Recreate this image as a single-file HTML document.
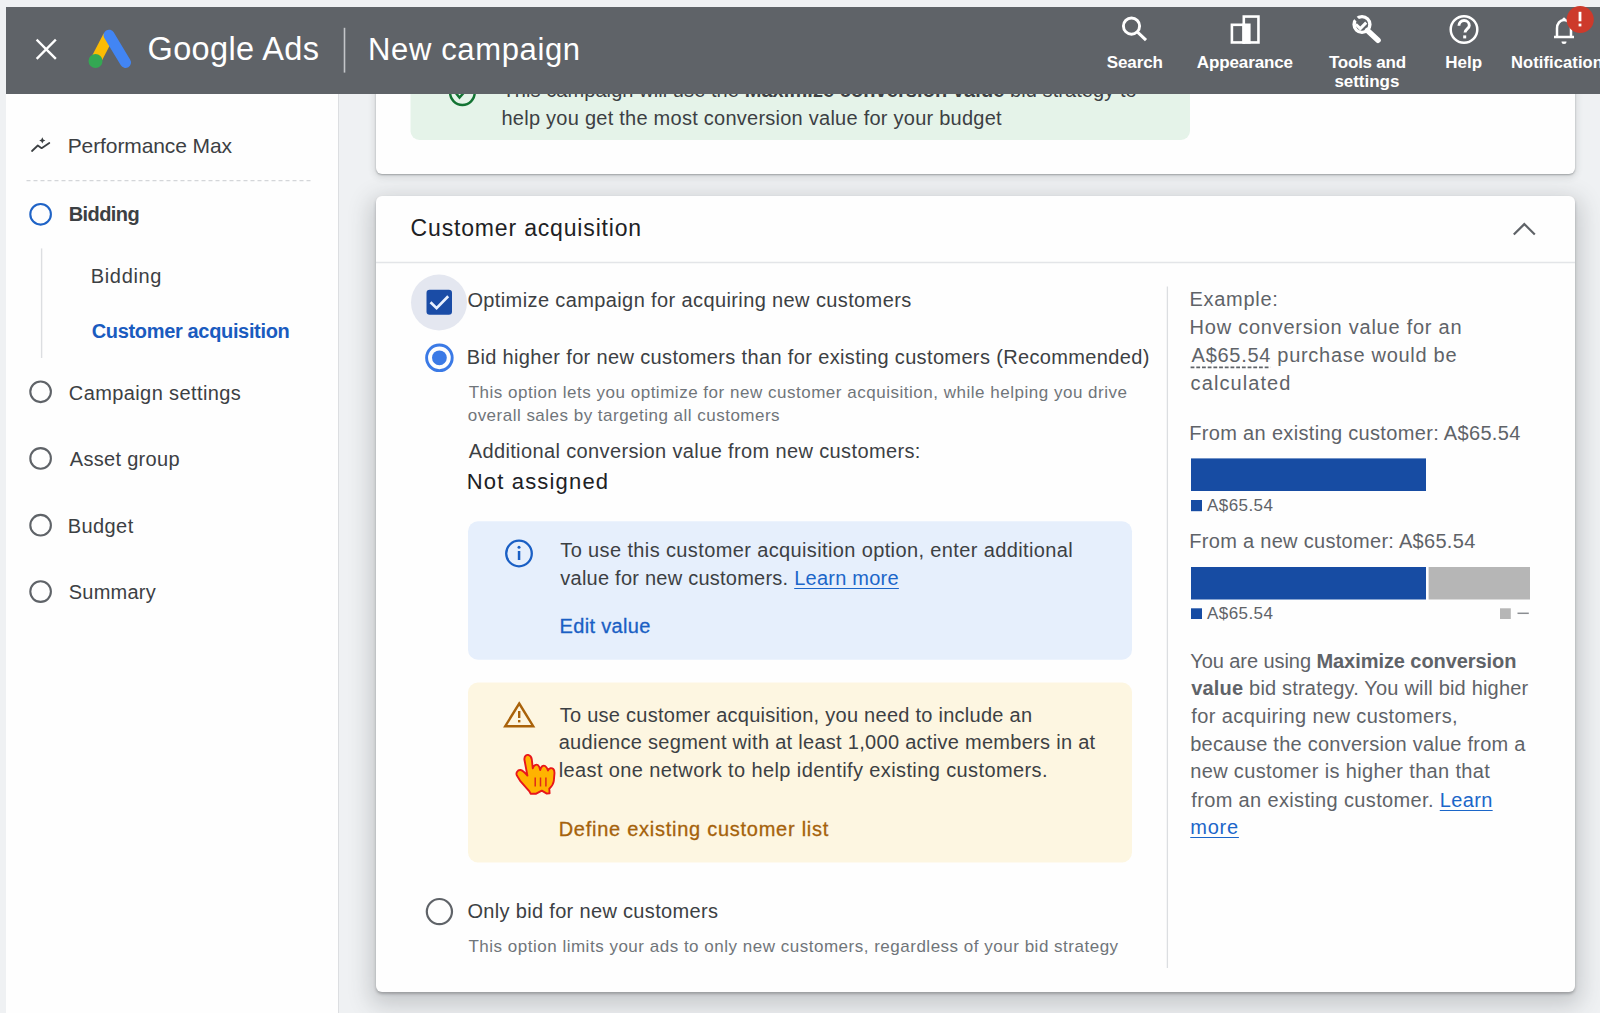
<!DOCTYPE html>
<html><head><meta charset="utf-8">
<style>
html,body{margin:0;padding:0;}
body{width:1600px;height:1013px;overflow:hidden;position:relative;background:#eff1f3;font-family:"Liberation Sans",sans-serif;}
.t{position:absolute;white-space:nowrap;}
.t a{color:#1b66c9;text-decoration:underline;text-underline-offset:3px;text-decoration-thickness:1.2px;}
.t b{font-weight:700;}
.du{}
#hdr{position:absolute;left:6px;top:7px;width:1594px;height:87px;background:#5f6368;z-index:5;}
#side{position:absolute;left:6px;top:94px;width:332px;height:919px;background:#fefefe;border-right:1px solid #dcdee1;}
.card{position:absolute;background:#fefefe;border-radius:6px;}
#card1{left:376px;top:40px;width:1199px;height:134px;box-shadow:0 1px 2px rgba(60,64,67,.4),0 2px 6px 2px rgba(60,64,67,.12);}
#card2{left:376px;top:196px;width:1199px;height:795.5px;box-shadow:0 2px 3px rgba(60,64,67,.35),0 8px 22px 6px rgba(60,64,67,.22);}
svg{position:absolute;left:0;top:0;overflow:visible;}
</style></head><body>
<div id="side"></div>
<div class="card" id="card1"></div>
<div class="card" id="card2"></div>
<svg width="1600" height="1013" style="z-index:1">
  <!-- sidebar -->
  <g fill="none" stroke="#3c4043" stroke-width="1.8" stroke-linejoin="round" stroke-linecap="round">
    <polyline points="32,151 37.8,145.5 41.6,148.2 49.3,143"/>
  </g>
  <path d="M42.3 137.3 l1 2.1 2.1 1 -2.1 1 -1 2.1 -1 -2.1 -2.1 -1 2.1 -1z" fill="#3c4043"/>
  <line x1="26.5" y1="180.6" x2="312.5" y2="180.6" stroke="#d4d6d9" stroke-width="1.2" stroke-dasharray="4 3"/>
  <circle cx="40.6" cy="214.3" r="10.3" fill="none" stroke="#1f63c6" stroke-width="2.1"/>
  <line x1="41.6" y1="248.4" x2="41.6" y2="358" stroke="#dcdee1" stroke-width="1.4"/>
  <g fill="none" stroke="#5f6368" stroke-width="2.1">
    <circle cx="40.6" cy="391.8" r="10.3"/>
    <circle cx="40.6" cy="458.4" r="10.3"/>
    <circle cx="40.6" cy="525.2" r="10.3"/>
    <circle cx="40.6" cy="591.6" r="10.3"/>
  </g>
  <!-- card1 green box -->
  <rect x="410.5" y="40" width="779.5" height="100" rx="9" fill="#e5f3e9"/>
  <circle cx="462.4" cy="92.6" r="12.3" fill="none" stroke="#137333" stroke-width="2.5"/>
  <polyline points="455,92 459.5,97.5 468,88" fill="none" stroke="#137333" stroke-width="2.5"/>
  <!-- card2 -->
  <line x1="376" y1="262.5" x2="1575" y2="262.5" stroke="#e3e5e8" stroke-width="1.5"/>
  <polyline points="1513.8,234.5 1524.3,224.1 1534.8,234.5" fill="none" stroke="#5f6368" stroke-width="2.2"/>
  <circle cx="439" cy="302.5" r="28" fill="#e4e7f0"/>
  <rect x="426.5" y="289.7" width="25.5" height="25.1" rx="3.2" fill="#1a4ca6"/>
  <polyline points="430.5,302.2 436.6,308.1 448.2,296.3" fill="none" stroke="#e8f0fe" stroke-width="2.7"/>
  <circle cx="439.4" cy="357.8" r="12.8" fill="none" stroke="#3b7ae6" stroke-width="2.9"/>
  <circle cx="439.4" cy="357.8" r="7.4" fill="#3b7ae6"/>
  <rect x="468" y="521.3" width="664" height="138.5" rx="10" fill="#e6effc"/>
  <circle cx="519" cy="553.5" r="12.8" fill="none" stroke="#1a5fc4" stroke-width="2.3"/>
  <rect x="517.8" y="551" width="2.5" height="9" fill="#1a5fc4"/>
  <circle cx="519" cy="547.3" r="1.5" fill="#1a5fc4"/>
  <rect x="468" y="682.5" width="664" height="180" rx="10" fill="#fdf6e1"/>
  <path d="M519.2 703.5 L533.2 726.2 L505.2 726.2 Z" fill="none" stroke="#a9620a" stroke-width="2.4" stroke-linejoin="miter"/>
  <rect x="518" y="711" width="2.4" height="7" fill="#a9620a"/>
  <rect x="518" y="720" width="2.4" height="2.4" fill="#a9620a"/>
  <circle cx="439.4" cy="911.6" r="12.6" fill="none" stroke="#5f6368" stroke-width="2.2"/>
  <line x1="1167.4" y1="286.5" x2="1167.4" y2="968" stroke="#dcdee1" stroke-width="1.3"/>
  <!-- bars -->
  <rect x="1191" y="458.4" width="235" height="32.6" fill="#174ca3"/>
  <rect x="1191" y="500" width="11" height="11.2" fill="#174ca3"/>
  <rect x="1191" y="567" width="235" height="32.5" fill="#174ca3"/>
  <rect x="1428.6" y="567" width="101.4" height="32.5" fill="#b6b6b6"/>
  <rect x="1191" y="608.3" width="11" height="10.7" fill="#174ca3"/>
  <rect x="1500" y="608.3" width="10.8" height="10.7" fill="#b6b6b6"/>
  <line x1="1190.6" y1="367.3" x2="1270.5" y2="367.3" stroke="#5f6368" stroke-width="1.7" stroke-dasharray="3.8 1.9"/>
  <line x1="1517.5" y1="613.3" x2="1528.8" y2="613.3" stroke="#8a8d91" stroke-width="1.5"/>
</svg>
<div style="position:absolute;left:0;top:0;z-index:2">
<div class="t" id="s_pmax" style="left:67.70px;top:133.40px;font-size:21px;line-height:26px;letter-spacing:-0.100px;color:#3c4043;">Performance Max</div>
<div class="t" id="s_bid" style="left:68.70px;top:202.25px;font-size:20px;line-height:25px;letter-spacing:-0.567px;color:#3c4043;font-weight:700;">Bidding</div>
<div class="t" id="s_bid2" style="left:90.75px;top:263.75px;font-size:20px;line-height:25px;letter-spacing:0.667px;color:#3c4043;">Bidding</div>
<div class="t" id="s_ca" style="left:91.75px;top:319.00px;font-size:20px;line-height:25px;letter-spacing:-0.342px;color:#1a5bbf;font-weight:700;">Customer acquisition</div>
<div class="t" id="s_cs" style="left:68.80px;top:380.60px;font-size:20px;line-height:25px;letter-spacing:0.400px;color:#3c4043;">Campaign settings</div>
<div class="t" id="s_ag" style="left:69.80px;top:447.00px;font-size:20px;line-height:25px;letter-spacing:0.300px;color:#3c4043;">Asset group</div>
<div class="t" id="s_bu" style="left:67.80px;top:514.00px;font-size:20px;line-height:25px;letter-spacing:0.400px;color:#3c4043;">Budget</div>
<div class="t" id="s_su" style="left:68.80px;top:579.70px;font-size:20px;line-height:25px;letter-spacing:0.233px;color:#3c4043;">Summary</div>
<div class="t" id="c1_l1" style="left:502.50px;top:77.50px;font-size:20px;line-height:25px;letter-spacing:0.075px;color:#3c4043;">This campaign will use the <b>Maximize conversion value</b> bid strategy to</div>
<div class="t" id="c1_l2" style="left:501.50px;top:105.50px;font-size:20px;line-height:25px;letter-spacing:0.249px;color:#3c4043;">help you get the most conversion value for your budget</div>
<div class="t" id="c2_title" style="left:410.60px;top:213.60px;font-size:23px;line-height:29px;letter-spacing:0.832px;color:#202124;">Customer acquisition</div>
<div class="t" id="c2_opt" style="left:467.40px;top:288.20px;font-size:20px;line-height:25px;letter-spacing:0.386px;color:#3c4043;">Optimize campaign for acquiring new customers</div>
<div class="t" id="c2_bid" style="left:466.70px;top:344.75px;font-size:20px;line-height:25px;letter-spacing:0.357px;color:#3c4043;">Bid higher for new customers than for existing customers (Recommended)</div>
<div class="t" id="c2_d1" style="left:468.70px;top:382.40px;font-size:17px;line-height:21px;letter-spacing:0.515px;color:#70757a;">This option lets you optimize for new customer acquisition, while helping you drive</div>
<div class="t" id="c2_d2" style="left:467.70px;top:405.00px;font-size:17px;line-height:21px;letter-spacing:0.487px;color:#70757a;">overall sales by targeting all customers</div>
<div class="t" id="c2_add" style="left:468.70px;top:439.00px;font-size:20px;line-height:25px;letter-spacing:0.370px;color:#3c4043;">Additional conversion value from new customers:</div>
<div class="t" id="c2_na" style="left:466.70px;top:468.00px;font-size:22px;line-height:28px;letter-spacing:1.182px;color:#202124;">Not assigned</div>
<div class="t" id="i_l1" style="left:560.30px;top:538.25px;font-size:20px;line-height:25px;letter-spacing:0.375px;color:#3c4043;">To use this customer acquisition option, enter additional</div>
<div class="t" id="i_l2" style="left:560.30px;top:566.40px;font-size:20px;line-height:25px;letter-spacing:0.241px;color:#3c4043;">value for new customers. <a>Learn more</a></div>
<div class="t" id="i_edit" style="left:559.50px;top:613.80px;font-size:20px;line-height:25px;letter-spacing:0.333px;color:#1a5fc4;-webkit-text-stroke:0.3px #1a5fc4;">Edit value</div>
<div class="t" id="w_l1" style="left:559.70px;top:702.50px;font-size:20px;line-height:25px;letter-spacing:0.264px;color:#3c4043;">To use customer acquisition, you need to include an</div>
<div class="t" id="w_l2" style="left:558.70px;top:730.10px;font-size:20px;line-height:25px;letter-spacing:0.289px;color:#3c4043;">audience segment with at least 1,000 active members in at</div>
<div class="t" id="w_l3" style="left:558.70px;top:757.70px;font-size:20px;line-height:25px;letter-spacing:0.392px;color:#3c4043;">least one network to help identify existing customers.</div>
<div class="t" id="w_def" style="left:558.70px;top:817.00px;font-size:20px;line-height:25px;letter-spacing:0.736px;color:#a5620b;-webkit-text-stroke:0.3px #a5620b;">Define existing customer list</div>
<div class="t" id="c2_only" style="left:467.40px;top:898.60px;font-size:20px;line-height:25px;letter-spacing:0.328px;color:#3c4043;">Only bid for new customers</div>
<div class="t" id="c2_d3" style="left:468.40px;top:936.40px;font-size:17px;line-height:21px;letter-spacing:0.509px;color:#70757a;">This option limits your ads to only new customers, regardless of your bid strategy</div>
<div class="t" id="r_ex" style="left:1189.60px;top:287.40px;font-size:20px;line-height:25px;letter-spacing:0.686px;color:#5f6368;">Example:</div>
<div class="t" id="r_l1" style="left:1189.60px;top:315.00px;font-size:20px;line-height:25px;letter-spacing:0.754px;color:#5f6368;">How conversion value for an</div>
<div class="t" id="r_l2" style="left:1191.60px;top:343.00px;font-size:20px;line-height:25px;letter-spacing:0.708px;color:#5f6368;"><span class=du>A$65.54</span> purchase would be</div>
<div class="t" id="r_l3" style="left:1190.60px;top:370.60px;font-size:20px;line-height:25px;letter-spacing:1.089px;color:#5f6368;">calculated</div>
<div class="t" id="r_from1" style="left:1189.25px;top:420.70px;font-size:20px;line-height:25px;letter-spacing:0.330px;color:#5f6368;">From an existing customer: A$65.54</div>
<div class="t" id="r_lg1" style="left:1207.00px;top:495.25px;font-size:17px;line-height:21px;letter-spacing:0.433px;color:#5f6368;">A$65.54</div>
<div class="t" id="r_from2" style="left:1189.25px;top:528.70px;font-size:20px;line-height:25px;letter-spacing:0.300px;color:#5f6368;">From a new customer: A$65.54</div>
<div class="t" id="r_lg2" style="left:1207.00px;top:602.80px;font-size:17px;line-height:21px;letter-spacing:0.433px;color:#5f6368;">A$65.54</div>
<div class="t" id="p1" style="left:1190.25px;top:648.50px;font-size:20px;line-height:25px;letter-spacing:-0.066px;color:#5f6368;">You are using <b>Maximize conversion</b></div>
<div class="t" id="p2" style="left:1191.25px;top:676.10px;font-size:20px;line-height:25px;letter-spacing:0.187px;color:#5f6368;"><b>value</b> bid strategy. You will bid higher</div>
<div class="t" id="p3" style="left:1191.25px;top:704.25px;font-size:20px;line-height:25px;letter-spacing:0.396px;color:#5f6368;">for acquiring new customers,</div>
<div class="t" id="p4" style="left:1190.25px;top:731.70px;font-size:20px;line-height:25px;letter-spacing:0.244px;color:#5f6368;">because the conversion value from a</div>
<div class="t" id="p5" style="left:1190.25px;top:758.70px;font-size:20px;line-height:25px;letter-spacing:0.339px;color:#5f6368;">new customer is higher than that</div>
<div class="t" id="p6" style="left:1191.25px;top:787.50px;font-size:20px;line-height:25px;letter-spacing:0.352px;color:#5f6368;">from an existing customer. <a>Learn</a></div>
<div class="t" id="p7" style="left:1190.25px;top:815.00px;font-size:20px;line-height:25px;letter-spacing:0.767px;color:#5f6368;"><a>more</a></div>
</div>
<!-- hand cursor -->
<svg width="1600" height="1013" style="z-index:3">
  <g>
    <path d="M524.4 759.5 C524.2 755.8 526.6 754.6 528.2 754.9 C530.4 755.4 531.5 757.4 531.8 759.5 L532.8 768.3 C533.6 764.9 536.3 764.1 537.8 765 C539.2 765.9 539.8 768 540.2 770 C541 766 543.5 765.1 545.1 766 C546.6 766.9 547.5 768.8 548 770.5 C549 767.8 551.8 767.6 553.3 769 C554.5 770.1 554.6 772.2 554.4 774.2 L553.8 781 C553.4 784.2 551.2 787 549.3 788.8 L549.6 793.3 L546.8 793.6 L541.8 790.6 L536.2 793.7 L530.6 793.7 L529.4 791.3 L520.6 781.4 L516.9 775.6 C515.6 773 517.6 769.6 520.6 770 C523.2 770.4 525.6 773.4 527.4 775.6 Z" fill="#ffb300" stroke="#e8161b" stroke-width="1.9" stroke-linejoin="round"/>
    <g stroke="#e0281b" stroke-width="1.5"><line x1="535.2" y1="777.5" x2="535.2" y2="786.5"/><line x1="540.5" y1="777.5" x2="540.5" y2="786.5"/><line x1="545.9" y1="777.5" x2="545.9" y2="786.5"/></g>
  </g>
</svg>
<div id="hdr">
<svg width="1594" height="87" style="left:0;top:0">
  <g stroke="#fff" stroke-width="2.4" stroke-linecap="square">
    <line x1="31.5" y1="33.5" x2="49" y2="51"/><line x1="49" y1="33.5" x2="31.5" y2="51"/>
  </g>
  <line x1="102.5" y1="29" x2="89.5" y2="54" stroke="#fbbc04" stroke-width="11" stroke-linecap="butt"/>
  <line x1="103" y1="28.2" x2="119.5" y2="55.5" stroke="#4285f4" stroke-width="11" stroke-linecap="round"/>
  <circle cx="89.5" cy="54" r="7" fill="#34a853"/>
  <line x1="338.5" y1="20.8" x2="338.5" y2="65.6" stroke="#c4c6c9" stroke-width="1.6"/>
  <!-- search -->
  <g fill="none" stroke="#fff">
    <circle cx="1125.5" cy="19.1" r="8.1" stroke-width="2.9"/>
    <line x1="1131.3" y1="24.9" x2="1140" y2="33.2" stroke-width="3"/>
  </g>
  <!-- appearance -->
  <g fill="none" stroke="#fff" stroke-width="2.6">
    <rect x="1237.8" y="9.55" width="14.65" height="25.9"/>
    <rect x="1225.9" y="17.8" width="11.9" height="17.65"/>
  </g>
  <rect x="1236.5" y="16.5" width="8.1" height="20.2" fill="#fff"/>
  <!-- tools -->
  <g fill="none" stroke="#fff" transform="translate(-6,-7)">
    <circle cx="1362" cy="24.5" r="7.9" stroke-width="3.4"/>
    <polyline points="1355.8,24.2 1360.3,28.6 1366.2,22.6" stroke-width="3"/>
    <line x1="1353.5" y1="16" x2="1359.5" y2="22" stroke="#5f6368" stroke-width="3.4"/>
    <line x1="1367.5" y1="30.5" x2="1378" y2="40.2" stroke-width="5.6" stroke-linecap="round"/>
  </g>
  <!-- help -->
  <circle cx="1458" cy="22.5" r="13.3" fill="none" stroke="#fff" stroke-width="2.5"/>
  <path d="M1452.9 18.8 c0-3 2.3-5.3 5.2-5.3 s5.2 2.2 5.2 4.9 c0 3.4-4.3 3.6-4.3 7.2" fill="none" stroke="#fff" stroke-width="2.9"/>
  <rect x="1457.2" y="28.4" width="3" height="3" fill="#fff"/>
  <!-- bell -->
  <path d="M1548 30 h20 M1551 29.5 v-8 c0-5 3-8.5 7-8.5 s7 3.5 7 8.5 v8" fill="none" stroke="#fff" stroke-width="2.5"/>
  <path d="M1555.5 34.5 a2.5 2.5 0 0 0 5 0z" fill="#fff"/>
  <circle cx="1558" cy="12" r="1.6" fill="#fff"/>
  <circle cx="1574.2" cy="12.5" r="13.6" fill="#cd3a2b"/>
  <rect x="1572.6" y="4.8" width="2.8" height="9.5" fill="#fff"/>
  <rect x="1572.6" y="16.6" width="2.8" height="2.8" fill="#fff"/>
</svg>
</div>
<div style="position:absolute;left:0;top:0;z-index:6">
<div class="t" id="h_gads" style="left:147.50px;top:29.30px;font-size:32.5px;line-height:41px;letter-spacing:0.378px;color:#ffffff;">Google Ads</div>
<div class="t" id="h_newc" style="left:368.00px;top:29.70px;font-size:31px;line-height:39px;letter-spacing:0.636px;color:#ffffff;">New campaign</div>
<div class="t" id="n_search" style="left:1106.75px;top:51.75px;font-size:17px;line-height:21px;letter-spacing:-0.100px;color:#ffffff;font-weight:700;">Search</div>
<div class="t" id="n_appear" style="left:1196.75px;top:51.75px;font-size:17px;line-height:21px;letter-spacing:-0.111px;color:#ffffff;font-weight:700;">Appearance</div>
<div class="t" id="n_tools" style="left:1329.00px;top:51.50px;font-size:17px;line-height:21px;letter-spacing:-0.250px;color:#ffffff;font-weight:700;">Tools and</div>
<div class="t" id="n_settings" style="left:1334.40px;top:70.60px;font-size:17px;line-height:21px;letter-spacing:-0.029px;color:#ffffff;font-weight:700;">settings</div>
<div class="t" id="n_help" style="left:1445.30px;top:51.50px;font-size:17px;line-height:21px;letter-spacing:0.000px;color:#ffffff;font-weight:700;">Help</div>
<div class="t" style="left:1511px;top:51.5px;font-size:16.5px;line-height:21px;letter-spacing:0.1px;color:#fff;font-weight:700">Notifications</div>
</div>
</body></html>
